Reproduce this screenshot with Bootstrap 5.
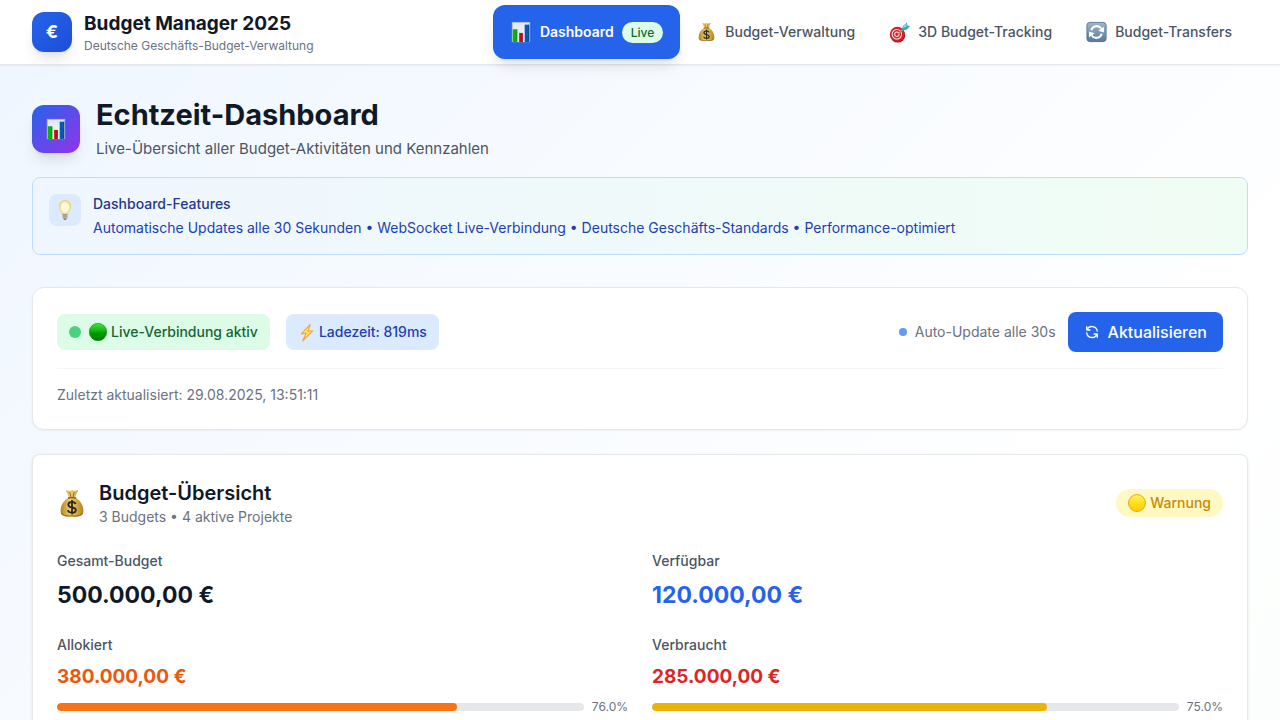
<!DOCTYPE html>
<html lang="de">
<head>
<meta charset="utf-8">
<meta name="viewport" content="width=device-width, initial-scale=1">
<title>Budget Manager 2025</title>
<link rel="stylesheet" href="https://cdn.jsdelivr.net/npm/bootstrap@5.3.0/dist/css/bootstrap.min.css">
<style>
:root{--ink:#111827;--muted:#6b7280;--slate:#4b5563;--blue:#2563eb}
body{font-family:Inter,"Liberation Sans",sans-serif;font-size:14px;line-height:20px;color:var(--ink);
  background:linear-gradient(135deg,#eff6ff 0,#fff 1100px,#f0fdf4 2200px) no-repeat #fff}
h1,h2,h3,p{margin:0}
svg{display:block;flex:none}
.topbar{min-height:65px;border-bottom:1px solid #e5e7eb;box-shadow:0 1px 2px rgba(0,0,0,.05);padding:0 32px;position:relative}
.brand-group,.hint,.overview{gap:12px}
.brand-mark{width:40px;height:40px;border-radius:12px;background:linear-gradient(135deg,#2563eb,#1d4ed8);color:#fff;font-weight:700;font-size:18px;box-shadow:0 10px 15px -3px rgba(0,0,0,.1),0 4px 6px -4px rgba(0,0,0,.1)}
.brand-name{font-size:19px;line-height:28px;font-weight:700}
.brand-sub{font-size:12px;line-height:16px;color:var(--muted)}
.tab{display:flex;align-items:center;gap:8px;padding:12px 16px;border-radius:12px;font-weight:500;color:var(--slate);text-decoration:none;white-space:nowrap}
.tab + .tab + .tab{margin-left:2px}
.tab.active{background:var(--blue);color:#fff;padding:16px 17px;font-weight:600;box-shadow:0 10px 15px -3px rgba(0,0,0,.1),0 4px 6px -4px rgba(0,0,0,.1)}
.live{background:#dcfce7;color:#166534;font-size:12px;line-height:17px;padding:2px 9px;font-weight:500}
main{padding:32px}
.page-mark{width:48px;height:48px;border-radius:12px;background:linear-gradient(135deg,#2563eb,#9333ea);box-shadow:0 10px 15px -3px rgba(0,0,0,.1),0 4px 6px -4px rgba(0,0,0,.1)}
.page-title{font-size:29px;line-height:36px;font-weight:700}
.page-sub{font-size:15px;line-height:24px;color:var(--slate)}
.hint{border:1px solid #bfdbfe;border-radius:8px;padding:16px;background:linear-gradient(90deg,#eff6ff,#f0fdf4);color:#1e40af}
.hint h2{font-size:14px;line-height:20px;font-weight:500;color:#1e3a8a}
.hint-mark{width:32px;height:32px;border-radius:8px;background:#dbeafe}
.panel{background:#fff;border:1px solid #e5e7eb;border-radius:8px;padding:24px;box-shadow:0 1px 3px rgba(0,0,0,.1)}
.status-panel{margin-top:32px;border-radius:12px;box-shadow:0 1px 2px rgba(0,0,0,.05)}
.chip{padding:8px 12px;border-radius:8px;font-weight:500}
.chip-live{background:#dcfce7;color:#166534}
.chip-load{background:#dbeafe;color:#1e40af}
.dot{border-radius:50%;flex:none;margin-right:8px}
.dot-live{width:12px;height:12px;background:#4ad27f}
.dot-auto{width:8px;height:8px;background:#6299f7}
.ball{margin-right:4px}
.flash{margin-right:3px}
.refresh{background:var(--blue);color:#fff;border:0;border-radius:8px;padding:8px 16px;font-size:16px;line-height:24px;font-weight:500;margin-left:12px}
.stamp{border-top:1px solid #f3f4f6;color:var(--muted)}
.section-title{font-size:20px;line-height:28px;font-weight:600}
.soft{color:var(--muted)}
.state{background:#fef9c3;color:#ca8a04;padding:4px 12px;font-weight:500}
.figures{display:grid;grid-template-columns:1fr 1fr;gap:24px}
.figures h3{font-size:14px;line-height:20px;font-weight:500;color:var(--slate);margin-bottom:8px}
.sum{font-size:23px;line-height:32px;font-weight:700}
.sum-sm{font-size:19px;line-height:28px;font-weight:700}
.sum-free{color:#2563eb}
.sum-alloc{color:#ea580c}
.sum-used{color:#dc2626}
.meter{height:8px;border-radius:4px;background:#e5e7eb;overflow:hidden}
.meter div{height:100%;border-radius:4px}
.bar-alloc{background:#f97316}
.bar-used{background:#eab308}
.pct{font-size:12px;line-height:16px;color:var(--muted)}
</style>
</head>
<body>
<svg width="0" height="0" class="position-absolute" aria-hidden="true">
  <defs>
    <linearGradient id="paper" x2="0" y2="1"><stop stop-color="#dfe7f0"/><stop offset="1" stop-color="#fafcfd"/></linearGradient>
    <linearGradient id="gold" x2="1"><stop stop-color="#b1842a"/><stop offset=".45" stop-color="#f3d267"/><stop offset="1" stop-color="#ae801f"/></linearGradient>
    <linearGradient id="steel" x2="0" y2="1"><stop stop-color="#9db7d0"/><stop offset="1" stop-color="#56789a"/></linearGradient>
    <linearGradient id="green" x2="0" y2="1"><stop stop-color="#4be045"/><stop offset=".45" stop-color="#0cb50a"/><stop offset=".55" stop-color="#009b00"/><stop offset="1" stop-color="#007d00"/></linearGradient>
    <linearGradient id="yellow" x2="0" y2="1"><stop stop-color="#fff06a"/><stop offset=".5" stop-color="#ffdf1c"/><stop offset="1" stop-color="#ffcb00"/></linearGradient>
    <radialGradient id="glow"><stop stop-color="#fffef2"/><stop offset=".65" stop-color="#fff8cc"/><stop offset="1" stop-color="#efcf68"/></radialGradient>
    <symbol id="chart" viewBox="0 0 22 24">
      <path fill="#a9b9ca" d="M1 1h20v22H1z"/><path fill="url(#paper)" d="M2 2h18v21H2z"/>
      <path fill="#04b50a" d="M2 9h5v14H2z"/><path fill="#c60b16" d="M9 13h4v10H9z"/><path fill="#0858b8" d="M15 4h5v19h-5z"/>
      <path fill="#000" opacity=".2" d="M6 9h1v14H6zM12 13h1v10h-1zM19 4h1v19h-1z"/>
    </symbol>
    <symbol id="bag" viewBox="0 0 24 28">
      <path fill="url(#gold)" d="M6 1l3 1 3-1 3 1 3-1-3 7c5 3 8 8 8 13 0 5-3 6-11 6S1 26 1 21c0-5 3-10 8-13z"/>
      <path fill="none" stroke="#8a611b" stroke-width="1.400" d="M8 8.500h8"/>
      <path fill="none" stroke="#805a17" stroke-width=".8" d="M10 3l1 5M14 3l-1 5M2 23c1 3 4 3 10 3s9 0 10-3"/>
      <path fill="none" stroke="#2b2a28" stroke-width="1.800" d="M15.500 14.500c-.5-1.500-2-2-3.500-2-2 0-3.500 1-3.500 2.600 0 3.900 7.200 1.600 7.200 5.200 0 1.700-1.700 2.600-3.700 2.600s-3.500-.8-3.900-2.500M12 10.500v14"/>
    </symbol>
    <symbol id="target" viewBox="0 0 24 24">
      <circle cx="10" cy="15" r="8.500" fill="#a90d13"/><circle cx="9.500" cy="14" r="8.500" fill="#d51f29"/>
      <g fill="none" stroke="#fbeeee" stroke-width="1.200"><circle cx="9" cy="14" r="5.400"/><circle cx="9" cy="14" r="2.500"/></g>
      <path stroke="#bd8a4f" stroke-width="1.300" d="M10 14l7-6"/>
      <path fill="#35aab2" d="M13.500 10.500L16 4.500l4.500-4 .5 3.500 3 .5-3.500 4z"/><path fill="#86dce0" d="M16 7l1-3 3-2v3z"/>
    </symbol>
    <symbol id="cycle" viewBox="0 0 24 24">
      <rect x="1" y="1" width="22" height="22" rx="3.500" fill="url(#steel)" stroke="#58738e"/>
      <g fill="none" stroke="#fff" stroke-width="2.300"><path d="M6 10a6.500 6.500 0 0 1 11.500-2M18 14a6.500 6.500 0 0 1-11.500 2"/></g>
      <path fill="#fff" d="M20.500 6v6.500l-6.500-2zM3.500 18v-6.500l6.500 2z"/>
    </symbol>
    <symbol id="bulb" viewBox="0 0 16 24">
      <path fill="url(#glow)" stroke="#ecd17b" stroke-width=".8" d="M8 1.500c4 0 6.200 2.800 6.200 6.300 0 4-2.500 5-3.500 9H5.300c-1-4-3.500-5-3.500-9C1.800 4.300 4 1.500 8 1.500z"/>
      <path fill="#888278" d="M5.500 16.500h5v4L9 23H7l-1.500-2.500z"/><path stroke="#d2cdc2" d="M5.500 18.500h5M5.500 20.500h5"/>
    </symbol>
    <symbol id="bolt" viewBox="0 0 16 20">
      <path fill="#ffe465" stroke="#f4a63a" stroke-width="1.200" stroke-linejoin="round" d="M11.500 1.500L2 11.500l5-.8-3.500 8L14 8.200l-5 .8z"/>
    </symbol>
  </defs>
</svg>

<header class="topbar bg-white d-flex flex-wrap align-items-center justify-content-between">
  <div class="d-flex align-items-center brand-group">
    <div class="brand-mark d-flex align-items-center justify-content-center">€</div>
    <div>
      <div class="brand-name">Budget Manager 2025</div>
      <div class="brand-sub">Deutsche Geschäfts-Budget-Verwaltung</div>
    </div>
  </div>
  <nav class="d-flex flex-wrap align-items-center" aria-label="Hauptnavigation">
    <a class="tab active" href="#dashboard" aria-current="page"><svg width="22" height="22"><use href="#chart"/></svg>Dashboard<span class="live rounded-pill">Live</span></a>
    <a class="tab" href="#verwaltung"><svg width="21" height="20"><use href="#bag"/></svg>Budget-Verwaltung</a>
    <a class="tab" href="#tracking"><svg width="21" height="21"><use href="#target"/></svg>3D Budget-Tracking</a>
    <a class="tab" href="#transfers"><svg width="21" height="22"><use href="#cycle"/></svg>Budget-Transfers</a>
  </nav>
</header>

<main id="dashboard">
  <div class="d-flex align-items-center gap-3 mb-3">
    <div class="page-mark d-flex align-items-center justify-content-center"><svg width="22" height="22"><use href="#chart"/></svg></div>
    <div>
      <h1 class="page-title mb-1">Echtzeit-Dashboard</h1>
      <p class="page-sub">Live-Übersicht aller Budget-Aktivitäten und Kennzahlen</p>
    </div>
  </div>

  <section class="hint d-flex align-items-start">
    <div class="hint-mark d-flex align-items-center justify-content-center"><svg width="16" height="22"><use href="#bulb"/></svg></div>
    <div>
      <h2 class="mb-1">Dashboard-Features</h2>
      <p>Automatische Updates alle 30 Sekunden • WebSocket Live-Verbindung • Deutsche Geschäfts-Standards • Performance-optimiert</p>
    </div>
  </section>

  <section class="panel status-panel">
    <div class="d-flex flex-wrap align-items-center justify-content-between gap-3">
      <div class="d-flex flex-wrap align-items-center gap-3">
        <div class="chip chip-live d-flex align-items-center">
          <span class="dot dot-live"></span>
          <svg class="ball" width="18" height="18" viewBox="0 0 18 18"><circle cx="9" cy="9" r="8.700" fill="url(#green)" stroke="#078807" stroke-width=".6"/></svg>Live-Verbindung aktiv
        </div>
        <div class="chip chip-load d-flex align-items-center"><svg class="flash" width="18" height="19"><use href="#bolt"/></svg>Ladezeit: 819ms</div>
      </div>
      <div class="d-flex align-items-center">
        <span class="dot dot-auto"></span>
        <span class="soft">Auto-Update alle 30s</span>
        <button type="button" class="refresh d-flex align-items-center gap-2">
          <svg width="16" height="16" viewBox="0 0 16 16" fill="none" stroke="#fff" stroke-width="1.300" stroke-linecap="round" stroke-linejoin="round"><path d="M2.700 2.700V6H6M2.900 6a5.400 5.400 0 0 1 10.400 1.200M13.300 13.300V10H10M13.100 10a5.400 5.400 0 0 1-10.400-1.200"/></svg>Aktualisieren
        </button>
      </div>
    </div>
    <p class="stamp mt-3 pt-3">Zuletzt aktualisiert: 29.08.2025, 13:51:11</p>
  </section>

  <section class="panel mt-4">
    <div class="d-flex align-items-center justify-content-between mb-4">
      <div class="d-flex align-items-center overview">
        <svg width="30" height="29"><use href="#bag"/></svg>
        <div>
          <h2 class="section-title">Budget-Übersicht</h2>
          <p class="soft">3 Budgets • 4 aktive Projekte</p>
        </div>
      </div>
      <span class="state rounded-pill d-flex align-items-center"><svg class="ball" width="18" height="18" viewBox="0 0 18 18"><circle cx="9" cy="9" r="8.500" fill="url(#yellow)" stroke="#e0a70a" stroke-width=".9"/></svg>Warnung</span>
    </div>
    <div class="figures">
      <div><h3>Gesamt-Budget</h3><p class="sum">500.000,00 €</p></div>
      <div><h3>Verfügbar</h3><p class="sum sum-free">120.000,00 €</p></div>
      <div>
        <h3>Allokiert</h3><p class="sum-sm sum-alloc">380.000,00 €</p>
        <div class="d-flex align-items-center gap-2 mt-2"><div class="meter flex-fill"><div class="bar-alloc" style="width:76%"></div></div><span class="pct">76.0%</span></div>
      </div>
      <div>
        <h3>Verbraucht</h3><p class="sum-sm sum-used">285.000,00 €</p>
        <div class="d-flex align-items-center gap-2 mt-2"><div class="meter flex-fill"><div class="bar-used" style="width:75%"></div></div><span class="pct">75.0%</span></div>
      </div>
    </div>
  </section>
</main>
<script src="https://cdn.jsdelivr.net/npm/bootstrap@5.3.0/dist/js/bootstrap.bundle.min.js"></script>
</body>
</html>
